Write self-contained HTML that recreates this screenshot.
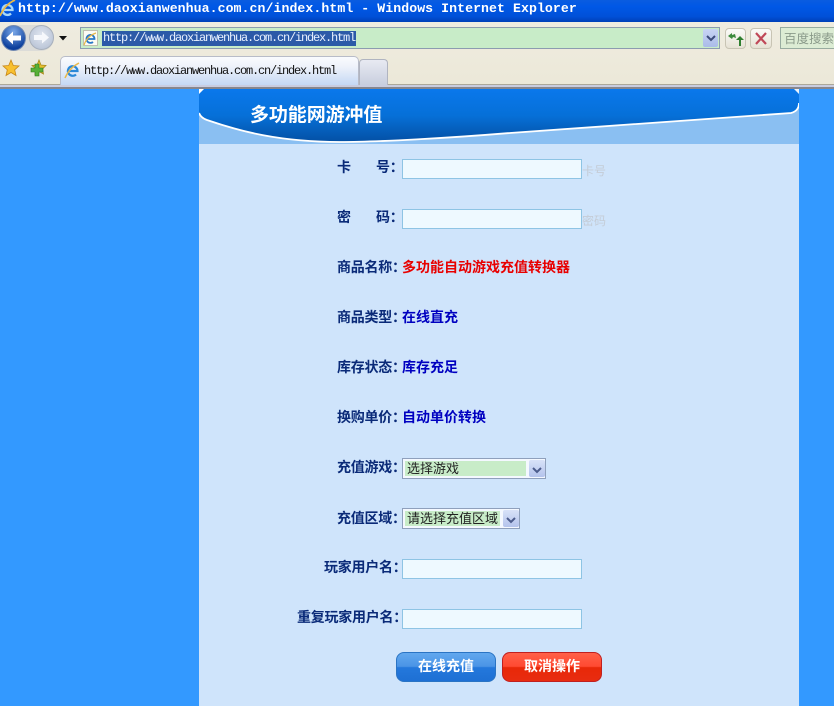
<!DOCTYPE html>
<html><head><meta charset="utf-8">
<style>
html,body{margin:0;padding:0;width:834px;height:706px;overflow:hidden;background:#3399ff;font-family:"Liberation Sans","Noto Sans CJK SC",sans-serif}
.a{position:absolute}
.t{position:absolute;white-space:nowrap;line-height:16px}
.l{position:absolute;white-space:nowrap;font:bold 14px/16px "Noto Sans CJK SC",sans-serif;color:#0a2a78;letter-spacing:-.25px}
.v{position:absolute;white-space:nowrap;font:bold 14px/16px "Noto Sans CJK SC",sans-serif;color:#0000c0}
.in{position:absolute;left:402px;width:178px;height:18px;background:#eef9ff;border:1px solid #8ec4e4}
.sel{position:absolute;background:#f4f8ff;border:1px solid #8fa0bc;box-sizing:border-box}
.opt{position:absolute;left:2px;top:2px;height:15px;background:#c8ecc8;font:13px/13px "Noto Sans CJK SC",sans-serif;color:#222;padding-left:2px;white-space:nowrap}
.arr{position:absolute;top:1px;width:16px;height:17px;background:linear-gradient(#d8e2f8,#b4c3ec);border-radius:2px}
.btn{position:absolute;top:652px;width:100px;height:30px;border-radius:8px;text-align:center;color:#fff;font:bold 14px/27px "Noto Sans CJK SC",sans-serif;box-sizing:border-box}
.u{font:12px/15px 'Liberation Mono',monospace;letter-spacing:-1.2px}
</style></head><body>

<!-- title bar -->
<div class="a" style="left:0;top:0;width:834px;height:22px;background:linear-gradient(#0a5ce0 0,#0058e6 30%,#0050d8 75%,#0040b8 100%)"></div>
<svg class="a" style="left:0;top:0" width="16" height="18" viewBox="0 0 16 18"><path d="M3 10H12.500A5 5 0 1 0 11 13.500" fill="none" stroke="#a8d8f8" stroke-width="2.300"/><path d="M0 16C3 9 8 3 15 0" fill="none" stroke="#e8b84a" stroke-width="1.800"/></svg>
<div class="t" style="left:18px;top:0;font:bold 13.2px/18px 'Liberation Mono',monospace;color:#fff;letter-spacing:.07px;width:600px">http://www.daoxianwenhua.com.cn/index.html - Windows Internet Explorer</div>

<!-- toolbar -->
<div class="a" style="left:0;top:22px;width:834px;height:63px;background:linear-gradient(#efece0,#ece8d8)"></div>
<div class="a" style="left:0;top:84px;width:834px;height:1px;background:#aca899"></div>
<div class="a" style="left:0;top:85px;width:834px;height:2px;background:#c9cde0"></div>
<div class="a" style="left:0;top:87px;width:834px;height:2px;background:#86868e"></div>

<!-- nav buttons -->
<div class="a" style="left:2px;top:25px;width:52px;height:26px;border-radius:13px;background:#dcdcd8"></div>
<div class="a" style="left:1px;top:25px;width:25px;height:26px;border-radius:50%;background:radial-gradient(circle at 50% 25%,#7aa8e8,#0c3f9c 75%);border:1px solid #7088b0;box-sizing:border-box"></div>
<svg class="a" style="left:1px;top:25px" width="26" height="26" viewBox="0 0 26 26"><path d="M5 13L12 6.500V10.500H20V15.500H12V19.500Z" fill="#fff"/></svg>
<div class="a" style="left:29px;top:25px;width:25px;height:25px;border-radius:50%;background:radial-gradient(circle at 50% 40%,#e0e6f0,#b0bcd0);border:1px solid #a8b0bc;box-sizing:border-box"></div>
<svg class="a" style="left:29px;top:25px" width="25" height="25" viewBox="0 0 25 25"><path d="M20 12.500L13 6.500V10H5V15H13V18.500Z" fill="#f6f8fc"/></svg>
<svg class="a" style="left:59px;top:36px" width="9" height="5"><path d="M0 0H8L4 4.500Z" fill="#111"/></svg>

<!-- address bar -->
<div class="a" style="left:80px;top:27px;width:640px;height:22px;box-sizing:border-box;background:#c8ecc8;border:1px solid #8c9cb0"></div>
<div class="a" style="left:83px;top:30px;width:15px;height:16px;background:#fbfbf4;border:1px solid #c0c0b0;box-sizing:border-box"></div>
<svg class="a" style="left:83px;top:31px" width="15" height="15" viewBox="0 0 15 15"><path d="M4 8H11.500A4 4 0 1 0 10 11" fill="none" stroke="#2878c8" stroke-width="1.800"/><path d="M1 14C3 8 7 4 13 2" fill="none" stroke="#e8b84a" stroke-width="1.200"/></svg>
<div class="a" style="left:102px;top:31px;width:254px;height:15px;background:#2c5aa8"></div>
<div class="t u" style="left:103px;top:31px;color:#e8f0ff;width:260px">http://www.daoxianwenhua.com.cn/index.html</div>
<div class="a" style="left:703px;top:29px;width:15px;height:18px;background:linear-gradient(#c8d4f4,#aabce8);border-radius:2px"></div>
<svg class="a" style="left:706px;top:35px" width="10" height="7"><path d="M1 1L5 5L9 1" fill="none" stroke="#3c4c7c" stroke-width="2"/></svg>

<div class="a" style="left:725px;top:28px;width:21px;height:21px;box-sizing:border-box;border:1px solid #c8c4b4;border-radius:4px;background:linear-gradient(#fbfbf8,#e6e2d4)"></div>
<svg class="a" style="left:725px;top:28px" width="21" height="21"><path d="M3 8L7 5V7L10 6L11 10L8 9L7 11Z" fill="#3c8a3c"/><path d="M11 12L15 8L19 12H16V18H14V12Z" fill="#2f7f2f"/></svg>
<div class="a" style="left:750px;top:28px;width:22px;height:21px;box-sizing:border-box;border:1px solid #c8c4b4;border-radius:4px;background:linear-gradient(#fbfbf8,#e6e2d4)"></div>
<svg class="a" style="left:750px;top:28px" width="22" height="21"><path d="M6 5L16 16M16 5L6 16" stroke="#c04858" stroke-width="2.200"/></svg>
<div class="a" style="left:780px;top:27px;width:54px;height:22px;box-sizing:border-box;background:#dcecd4;border:1px solid #98aca0;border-right:0"></div>
<div class="t" style="left:784px;top:30px;font-size:12.500px;color:#8a9a8a;font-family:'Noto Sans CJK SC',sans-serif">百度搜索</div>

<!-- favorites -->
<svg class="a" style="left:2px;top:59px" width="18" height="18" viewBox="0 0 18 18"><path d="M9 1L11.300 6.500L17 7L12.700 10.800L14 16.500L9 13.500L4 16.500L5.300 10.800L1 7L6.700 6.500Z" fill="#f8c030" stroke="#c88818" stroke-width=".8"/></svg>
<svg class="a" style="left:29px;top:59px" width="18" height="18" viewBox="0 0 18 18"><path d="M10 1L12 6L17 6.500L13.500 10L14.500 15L10 12.500L6 15L7 10L3 6.500L8 6Z" fill="#e8c030" stroke="#a88818" stroke-width=".8"/><path d="M2 9H6V5H10V9H14V13H10V17H6V13H2Z" fill="#58b038" stroke="#2c7818" stroke-width=".6"/></svg>

<!-- tabs -->
<div class="a" style="left:60px;top:56px;width:299px;height:29px;box-sizing:border-box;border:1px solid #b8bcc8;border-bottom:0;border-radius:5px 5px 0 0;background:linear-gradient(#fafcfe 0,#eef2fa 35%,#c4d8f4 100%)"></div>
<svg class="a" style="left:64px;top:62px" width="17" height="17" viewBox="0 0 17 17"><path d="M4 9H13.500A4.800 4.800 0 1 0 12 12.500" fill="none" stroke="#2a88d8" stroke-width="2.200"/><path d="M1 16C4 9 9 4 15 1" fill="none" stroke="#e8b84a" stroke-width="1.500"/></svg>
<div class="t u" style="left:84px;top:64px;color:#111;width:260px">http://www.daoxianwenhua.com.cn/index.html</div>
<div class="a" style="left:359px;top:59px;width:29px;height:26px;box-sizing:border-box;border:1px solid #b0b4c0;border-bottom:0;border-radius:4px 4px 0 0;background:linear-gradient(#e8eaf2,#c8cede)"></div>

<!-- panel -->
<div class="a" style="left:199px;top:89px;width:600px;height:617px;background:#cfe4fb"></div>
<svg class="a" style="left:199px;top:89px" width="600" height="55" viewBox="0 0 600 55">
<defs><linearGradient id="g" x1="0" y1="0" x2="0" y2="1"><stop offset="0" stop-color="#0a78ec"/><stop offset=".5" stop-color="#0670d8"/><stop offset="1" stop-color="#0450a4"/></linearGradient></defs>
<rect width="600" height="55" fill="#8abff2"/>
<path d="M0 0H600V14Q600 22 592 24L311 44C250 49 180 53 141 53C80 53 40 42 8 31Q2 29 0 24Z" fill="url(#g)"/>
<path d="M0 24Q2 29 8 31C40 42 80 53 141 53C180 53 250 49 311 44L592 24Q600 22 600 14" fill="none" stroke="#fff" stroke-width="1.800"/>
<path d="M0 0H5L0 5Z" fill="#fff"/><path d="M600 0H595L600 5Z" fill="#e8f2fc"/>
</svg>
<div class="t" style="left:250px;top:102px;font:700 19px/24px 'Noto Sans CJK SC',sans-serif;color:#fff;letter-spacing:-.1px">多功能网游冲值</div>

<!-- rows -->
<div class="l" style="left:337px;top:159px">卡</div><div class="l" style="left:376px;top:159px">号：</div>
<div class="in" style="top:159px"></div>
<div class="t" style="left:582px;top:163px;font:12px/16px 'Noto Sans CJK SC',sans-serif;color:#c4ccd6">卡号</div>

<div class="l" style="left:337px;top:209px">密</div><div class="l" style="left:376px;top:209px">码：</div>
<div class="in" style="top:209px"></div>
<div class="t" style="left:582px;top:213px;font:12px/16px 'Noto Sans CJK SC',sans-serif;color:#c4ccd6">密码</div>

<div class="l" style="left:337px;top:259px">商品名称：</div>
<div class="v" style="left:402px;top:259px;color:#e80000">多功能自动游戏充值转换器</div>
<div class="l" style="left:337px;top:309px">商品类型：</div>
<div class="v" style="left:402px;top:309px">在线直充</div>
<div class="l" style="left:337px;top:359px">库存状态：</div>
<div class="v" style="left:402px;top:359px">库存充足</div>
<div class="l" style="left:337px;top:409px">换购单价：</div>
<div class="v" style="left:402px;top:409px">自动单价转换</div>

<div class="l" style="left:337px;top:459px">充值游戏：</div>
<div class="sel" style="left:402px;top:458px;width:144px;height:21px"><div class="opt" style="width:119px">选择游戏</div><div class="arr" style="left:126px"></div><svg class="a" style="left:129px;top:8px" width="10" height="7"><path d="M1 1L5 5L9 1" fill="none" stroke="#4c5c8c" stroke-width="2"/></svg></div>

<div class="l" style="left:337px;top:510px">充值区域：</div>
<div class="sel" style="left:402px;top:508px;width:118px;height:21px"><div class="opt" style="width:93px">请选择充值区域</div><div class="arr" style="left:100px"></div><svg class="a" style="left:103px;top:8px" width="10" height="7"><path d="M1 1L5 5L9 1" fill="none" stroke="#4c5c8c" stroke-width="2"/></svg></div>

<div class="l" style="left:324px;top:559px">玩家用户名：</div>
<div class="in" style="top:559px"></div>
<div class="l" style="left:297px;top:609px">重复玩家用户名：</div>
<div class="in" style="top:609px"></div>

<div class="btn" style="left:396px;background:linear-gradient(#62a8ee 0,#4a94e6 48%,#2478dc 52%,#1e70d4 100%);border:1px solid #2a74c4">在线充值</div>
<div class="btn" style="left:502px;background:linear-gradient(#ff6048 0,#ff4a32 48%,#e82808 52%,#e82c10 100%);border:1px solid #c02020">取消操作</div>
</body></html>
